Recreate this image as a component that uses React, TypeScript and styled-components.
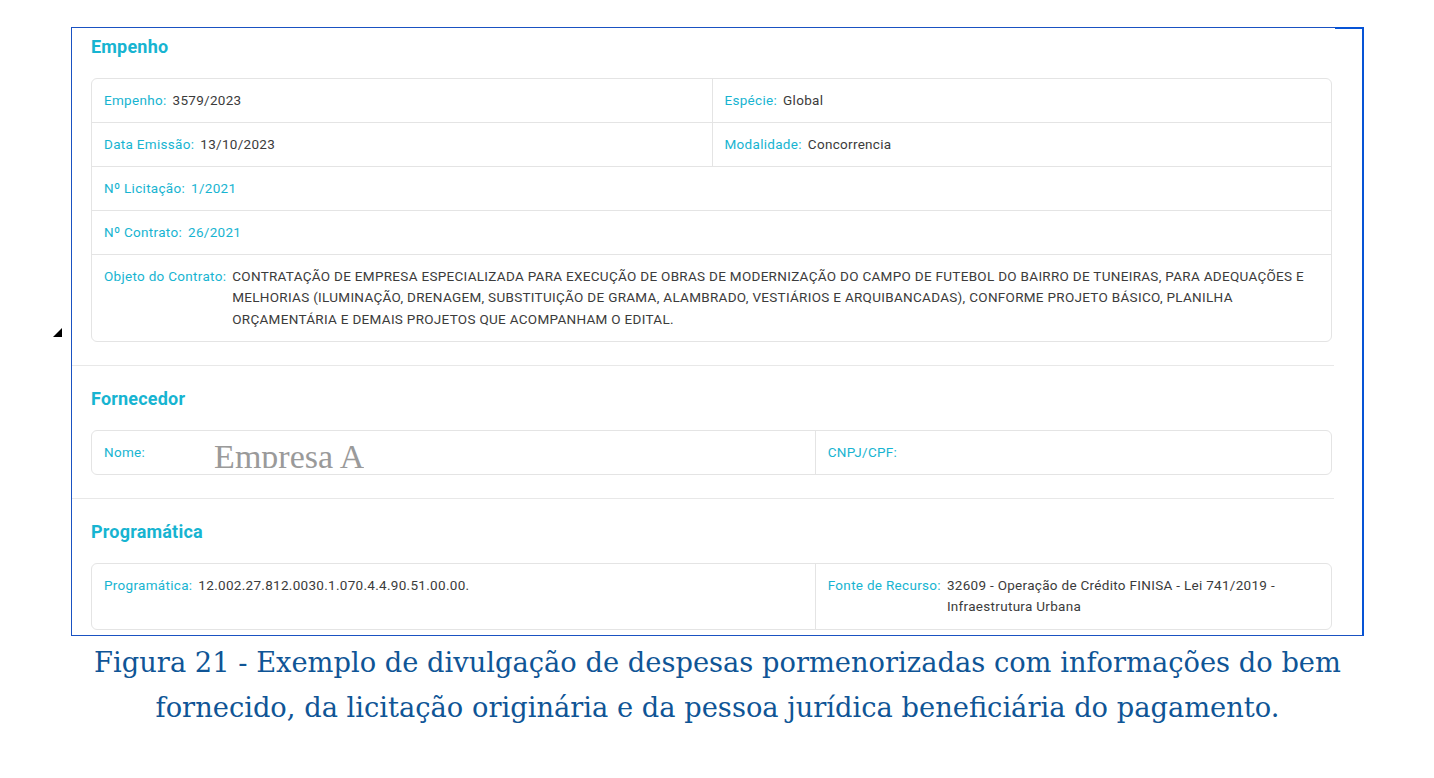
import React from "react";
import styled, { createGlobalStyle } from "styled-components";

const GlobalStyle = createGlobalStyle`
  body {
    margin: 0;
    background: #ffffff;
    font-family: Roboto, "Liberation Sans", sans-serif;
  }
`;

const CYAN = "#17b4d1";
const LINE = "#e4e4e4";

const Page = styled.div`
  position: relative;
  padding: 27px 0 0 71px;
  width: 1293px;
`;

// small resize handle left of the panel
const Grip = styled.span`
  position: absolute;
  left: 53px;
  top: 328px;
  width: 0;
  height: 0;
  border-style: solid;
  border-width: 0 0 9px 9px;
  border-color: transparent transparent #000 transparent;
`;

const Frame = styled.div`
  position: relative;
  width: 1290px;
  border: 1px solid #1a52c2;
  border-right: 2px solid #0654d6;

  &::after {
    content: "";
    position: absolute;
    top: -1px;
    right: -2px;
    width: 29px;
    height: 2px;
    background: #0654d6;
  }
`;

const Panel = styled.div`
  width: 1262px;
`;

const Section = styled.section<{ $first?: boolean; $last?: boolean }>`
  padding: ${(p) => (p.$first ? "9px" : "23px")} 2px
    ${(p) => (p.$last ? "5px" : "23px")} 19px;
  border-bottom: ${(p) => (p.$last ? "none" : "1px solid #e8e8e8")};
`;

const Heading = styled.h2`
  margin: 0 0 21px;
  font-size: 18px;
  line-height: 20px;
  font-weight: 700;
  letter-spacing: 0.2px;
  color: ${CYAN};
`;

const Card = styled.div`
  border: 1px solid ${LINE};
  border-radius: 6px;
  overflow: hidden;
`;

const Row = styled.div<{ $cols?: string }>`
  display: grid;
  grid-template-columns: ${(p) => p.$cols ?? "1fr"};

  & + & {
    border-top: 1px solid ${LINE};
  }
`;

const Cell = styled.div`
  display: flex;
  align-items: flex-start;
  padding: 10.75px 12px;
  font-size: 13.5px;
  line-height: 21.5px;
  letter-spacing: 0.3px;

  & + & {
    border-left: 1px solid ${LINE};
  }
`;

const Label = styled.span`
  flex: none;
  margin-right: 6px;
  color: ${CYAN};
  white-space: nowrap;
`;

const Value = styled.span<{ $accent?: boolean }>`
  color: ${(p) => (p.$accent ? CYAN : "#3b3b3b")};
`;

// supplier name pasted over the cell, cut at its baseline
const NameStamp = styled.span`
  display: block;
  height: 28.5px;
  margin: -2px 0 -5px 63px;
  overflow: hidden;
  font-family: "Liberation Serif", serif;
  font-size: 34px;
  line-height: 34px;
  letter-spacing: normal;
  color: #9a9a9a;
  white-space: nowrap;
`;

const Caption = styled.p`
  margin: 4px 0 0;
  width: 1293px;
  text-align: center;
  font-family: "DejaVu Serif", "Liberation Serif", serif;
  font-size: 27.3px;
  line-height: 45px;
  color: #0f5596;
  white-space: nowrap;
`;

const Field = ({
  label,
  value,
  accent,
}: {
  label: string;
  value?: React.ReactNode;
  accent?: boolean;
}) => (
  <Cell>
    <Label>{label}</Label>
    {value !== undefined && <Value $accent={accent}>{value}</Value>}
  </Cell>
);

export default function App() {
  return (
    <>
      <GlobalStyle />
      <Page>
        <Grip />
        <Frame>
          <Panel>
            <Section $first>
              <Heading>Empenho</Heading>
              <Card>
                <Row $cols="1fr 1fr">
                  <Field label="Empenho:" value="3579/2023" />
                  <Field label="Espécie:" value="Global" />
                </Row>
                <Row $cols="1fr 1fr">
                  <Field label="Data Emissão:" value="13/10/2023" />
                  <Field label="Modalidade:" value="Concorrencia" />
                </Row>
                <Row>
                  <Field label="Nº Licitação:" value="1/2021" accent />
                </Row>
                <Row>
                  <Field label="Nº Contrato:" value="26/2021" accent />
                </Row>
                <Row>
                  <Field
                    label="Objeto do Contrato:"
                    value="CONTRATAÇÃO DE EMPRESA ESPECIALIZADA PARA EXECUÇÃO DE OBRAS DE MODERNIZAÇÃO DO CAMPO DE FUTEBOL DO BAIRRO DE TUNEIRAS, PARA ADEQUAÇÕES E MELHORIAS (ILUMINAÇÃO, DRENAGEM, SUBSTITUIÇÃO DE GRAMA, ALAMBRADO, VESTIÁRIOS E ARQUIBANCADAS), CONFORME PROJETO BÁSICO, PLANILHA ORÇAMENTÁRIA E DEMAIS PROJETOS QUE ACOMPANHAM O EDITAL."
                  />
                </Row>
              </Card>
            </Section>

            <Section>
              <Heading>Fornecedor</Heading>
              <Card>
                <Row $cols="7fr 5fr">
                  <Cell>
                    <Label>Nome:</Label>
                    <NameStamp>Empresa A</NameStamp>
                  </Cell>
                  <Field label="CNPJ/CPF:" />
                </Row>
              </Card>
            </Section>

            <Section $last>
              <Heading>Programática</Heading>
              <Card>
                <Row $cols="7fr 5fr">
                  <Field
                    label="Programática:"
                    value="12.002.27.812.0030.1.070.4.4.90.51.00.00."
                  />
                  <Field
                    label="Fonte de Recurso:"
                    value="32609 - Operação de Crédito FINISA - Lei 741/2019 - Infraestrutura Urbana"
                  />
                </Row>
              </Card>
            </Section>
          </Panel>
        </Frame>
        <Caption>
          Figura 21 - Exemplo de divulgação de despesas pormenorizadas com
          informações do bem
          <br />
          fornecido, da licitação originária e da pessoa jurídica beneficiária
          do pagamento.
        </Caption>
      </Page>
    </>
  );
}
